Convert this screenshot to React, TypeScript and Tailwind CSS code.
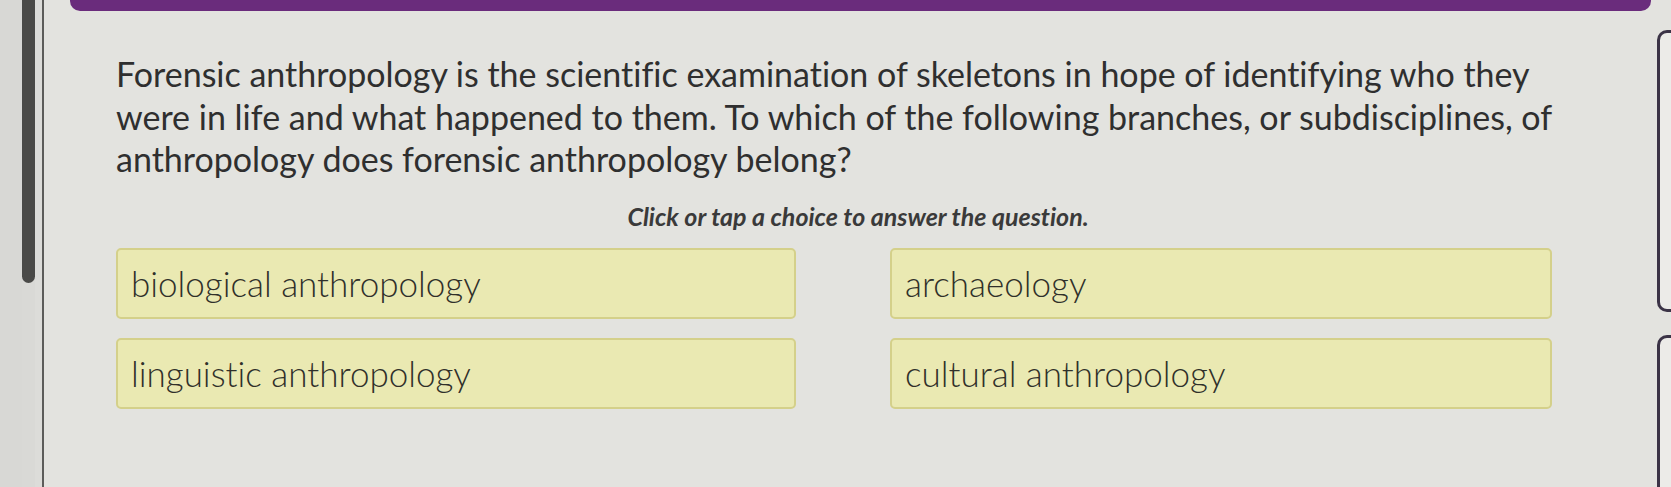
import React from "react";

const choices = [
  "biological anthropology",
  "archaeology",
  "linguistic anthropology",
  "cultural anthropology",
];

export default function App() {
  return (
    <div
      className="flex h-[487px] w-full overflow-hidden bg-[#d9d9d6] [font-variant-ligatures:none]"
      style={{ fontFamily: "Lato, 'Noto Sans', sans-serif" }}
    >
      {/* left gutter with scrollbar */}
      <div className="flex w-[44px] shrink-0">
        <div className="w-[22px] bg-[#d8d8d5]" />
        <div className="flex w-[13px] flex-col">
          <div className="h-[283px] rounded-b-full bg-[#4a4a48]" />
        </div>
        <div className="w-[7px] bg-[#dcdcd9]" />
        <div className="w-[2px] bg-[#5c5c5a]" />
      </div>

      {/* main panel */}
      <div className="flex flex-1 flex-col bg-[#e3e3df]">
        <div className="ml-[26px] mr-[6px] h-[11px] rounded-b-[10px] bg-[#6a2c7c]" />

        <div className="flex w-[1508px] flex-col pl-[72px]">
          <p className="mt-[42px] whitespace-nowrap text-[34px] leading-[42.5px] text-[#2f2f2f]">
            Forensic anthropology is the scientific examination of skeletons in hope of identifying who they
            <br />
            were in life and what happened to them. To which of the following branches, or subdisciplines, of
            <br />
            anthropology does forensic anthropology belong?
          </p>

          <p className="mt-[20px] pl-[48px] text-center text-[25px] font-bold italic leading-[30px] text-[#3a3a3a]">
            Click or tap a choice to answer the question.
          </p>

          <div className="mt-[17px] grid grid-cols-[680px_662px] gap-x-[94px] gap-y-[19px]">
            {choices.map((c) => (
              <button
                key={c}
                className="flex h-[71px] items-center rounded-[5px] border-2 border-[#d4d08a] bg-[#eae9b2] pl-[13px] text-left text-[35px] font-light text-[#30302a]"
              >
                {c}
              </button>
            ))}
          </div>
        </div>
      </div>

      {/* right edge panels */}
      <div className="flex w-[14px] shrink-0 flex-col bg-[#e3e3df]">
        <div className="mt-[30px] h-[282px] rounded-l-[10px] border-y-[3px] border-l-[3px] border-[#3b3346] bg-[#ecebe8]" />
        <div className="mt-[23px] flex-1 rounded-tl-[10px] border-t-[3px] border-l-[3px] border-[#3b3346] bg-[#ecebe8]" />
      </div>
    </div>
  );
}
